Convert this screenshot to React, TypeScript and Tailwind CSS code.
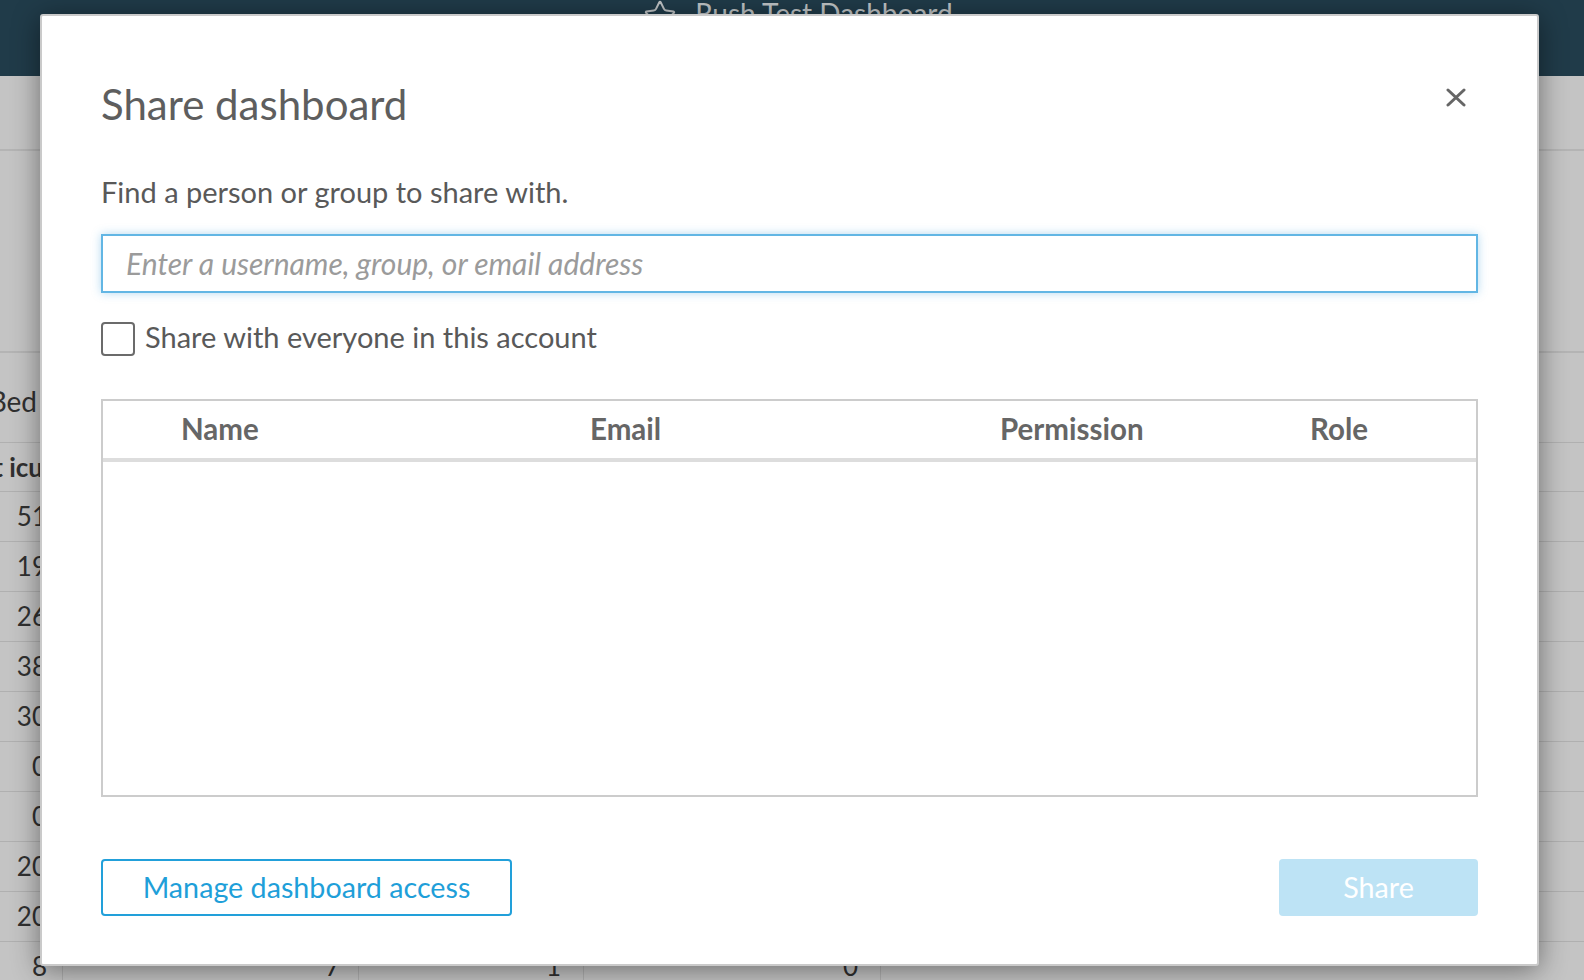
import React from "react";
import { Star } from "lucide-react";

const firstCol = ["51", "19", "26", "38", "30", "0", "0", "20", "20", "8"];
const otherCols = [
  ["12", "4", "3"],
  ["9", "2", "1"],
  ["14", "5", "0"],
  ["22", "6", "2"],
  ["17", "3", "1"],
  ["0", "0", "0"],
  ["0", "0", "0"],
  ["11", "2", "0"],
  ["10", "3", "1"],
  ["7", "1", "0"],
];

function BackgroundPage() {
  return (
    <div className="flex flex-col w-full h-full bg-[#c4c4c4] text-[#303030]">
      <header className="h-[76px] bg-[#203b49] flex justify-center pl-[12px] shrink-0">
        <div className="flex items-start gap-[18px] text-[#bfc3c5]">
          <Star size={34} strokeWidth={1.4} className="-mt-[1px]" />
          <span className="text-[28px] leading-[26px]">Rush Test Dashboard</span>
        </div>
      </header>
      <div className="h-[75px] border-b-2 border-[#b4b4b4] shrink-0" />
      <div className="h-[202px] border-b-2 border-[#b4b4b4] shrink-0" />
      <div className="flex flex-col">
        <div className="h-[89px] flex items-center pt-[6px]">
          <div className="w-[63px] overflow-hidden flex justify-end pr-[26px] whitespace-nowrap text-[28px]">
            Total Bed
          </div>
        </div>
        <div className="h-[50px] flex items-center border-y border-[#b0b0b0]">
          <div className="w-[63px] overflow-hidden flex justify-end pr-[20px] whitespace-nowrap text-[26px] font-bold">
            Count icu
          </div>
        </div>
        {firstCol.map((v, i) => (
          <div key={i} className="h-[50px] flex border-b border-[#b0b0b0] text-[26px]">
            <div className="w-[63px] flex items-center justify-end pr-[15px] border-r border-[#b0b0b0]">{v}</div>
            <div className="w-[296px] flex items-center justify-end pr-[18px] border-r border-[#b0b0b0]">{otherCols[i][0]}</div>
            <div className="w-[225px] flex items-center justify-end pr-[22px] border-r border-[#b0b0b0]">{otherCols[i][1]}</div>
            <div className="w-[297px] flex items-center justify-end pr-[22px] border-r border-[#b0b0b0]">{otherCols[i][2]}</div>
          </div>
        ))}
      </div>
    </div>
  );
}

function CloseIcon() {
  return (
    <svg width="20" height="19" viewBox="0 0 20 19" fill="none" stroke="#666666" strokeWidth="3" strokeLinecap="round">
      <line x1="2" y1="2" x2="18" y2="17" />
      <line x1="18" y1="2" x2="2" y2="17" />
    </svg>
  );
}

function ShareModal() {
  return (
    <div className="absolute left-[40px] top-[14px] w-[1499px] h-[952px] bg-white border-2 border-[#cacaca] rounded-[3px] shadow-[0_4px_28px_rgba(0,0,0,0.45)] flex flex-col px-[59px] pt-[63px]">
      <div className="flex justify-between h-[50px]">
        <h2 className="text-[42px] leading-[50px] text-[#5e5e5e]">Share dashboard</h2>
        <button className="self-start mt-[9px] mr-[12px]">
          <CloseIcon />
        </button>
      </div>

      <p className="mt-[45px] text-[29px] leading-[36px] text-[#595959]">Find a person or group to share with.</p>

      <div className="mt-[24px] h-[59px] border-2 border-[#62b6e4] shadow-[0_0_9px_rgba(40,150,215,0.35)] flex items-center px-[23px]">
        <input
          className="w-full outline-none bg-transparent text-[30px] italic text-[#444] placeholder:text-[#9b9b9b]"
          placeholder="Enter a username, group, or email address"
        />
      </div>

      <label className="mt-[29px] h-[34px] flex items-center gap-[10px]">
        <span className="w-[34px] h-[34px] border-2 border-[#6b6b6b] rounded-[4px] shrink-0" />
        <span className="text-[29px] leading-[34px] text-[#595959] -mt-[4px]">Share with everyone in this account</span>
      </label>

      <div className="mt-[43px] h-[398px] border-2 border-[#cccccc] flex flex-col">
        <div className="h-[61px] border-b-4 border-[#dddddd] flex items-center text-[29.5px] font-bold text-[#666666]">
          <div className="w-[487px] pl-[78px]">Name</div>
          <div className="w-[410px]">Email</div>
          <div className="w-[310px]">Permission</div>
          <div className="flex-1">Role</div>
        </div>
        <div className="flex-1" />
      </div>

      <div className="mt-[62px] flex justify-between">
        <button className="w-[411px] h-[57px] border-2 border-[#22a0da] rounded-[4px] text-[28.7px] text-[#1f9fd9] flex items-center justify-center">
          Manage dashboard access
        </button>
        <button className="w-[199px] h-[57px] bg-[#bde3f5] rounded-[4px] text-[28.7px] text-white flex items-center justify-center">
          Share
        </button>
      </div>
    </div>
  );
}

export default function App() {
  return (
    <div className="relative w-[1584px] h-[980px] overflow-hidden font-['Lato',sans-serif]">
      <BackgroundPage />
      <ShareModal />
    </div>
  );
}
